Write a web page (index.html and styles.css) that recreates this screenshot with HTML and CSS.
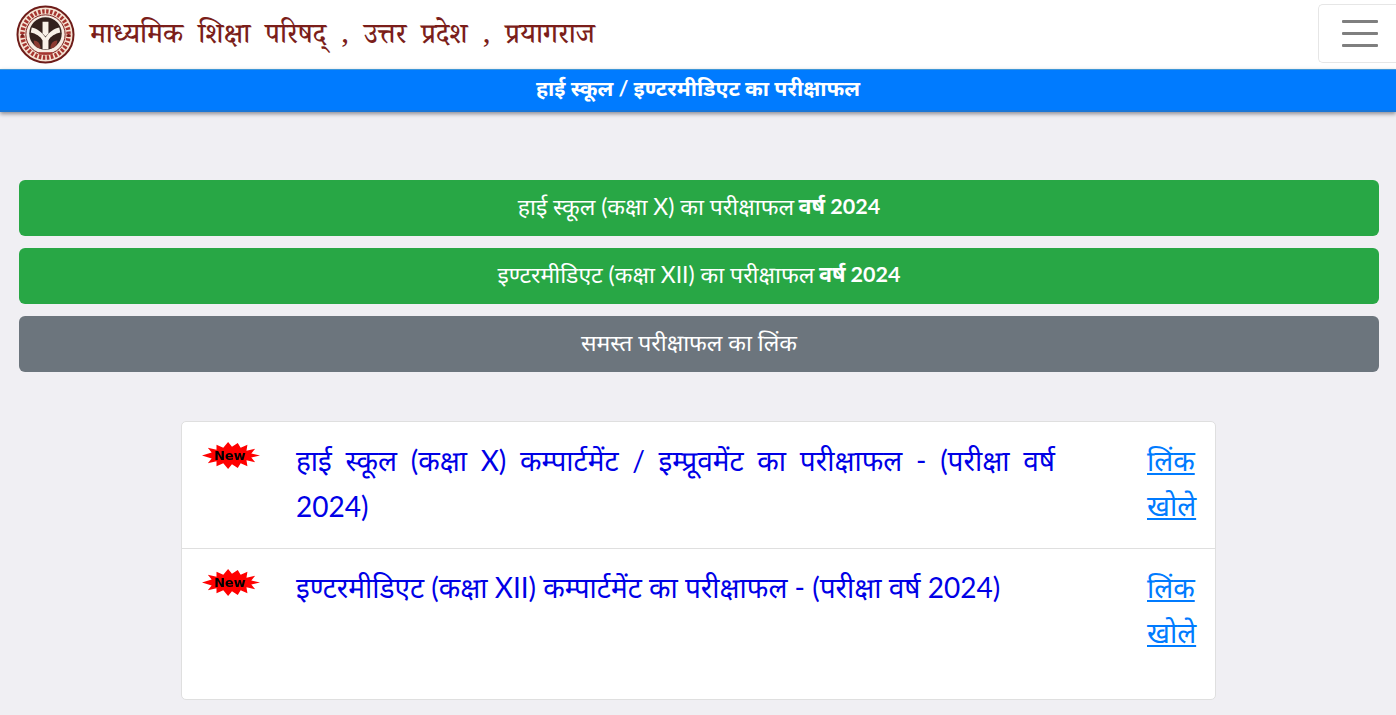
FILE: index.html
```html
<!DOCTYPE html>
<html lang="hi">
<head>
<meta charset="utf-8">
<title>माध्यमिक शिक्षा परिषद्</title>
<link rel="stylesheet" href="styles.css">
</head>
<body>
<header class="navbar">
  <div class="brand">
    <svg class="logo" viewBox="0 0 60 60" aria-hidden="true">
      <circle cx="30" cy="30" r="28.5" fill="#f5e3d3" stroke="#6e1c19" stroke-width="2"/>
      <circle cx="30" cy="30" r="23.5" fill="none" stroke="#a5352f" stroke-width="4.5" stroke-dasharray="2.5 1.6"/>
      <circle cx="30" cy="30" r="20" fill="#f7ece2" stroke="#7a1f1c" stroke-width="1"/>
      <circle cx="30" cy="29" r="16.5" fill="#33211d"/>
      <circle cx="6.5" cy="31" r="1.6" fill="#6e1c19"/>
      <circle cx="53.5" cy="31" r="1.6" fill="#6e1c19"/>
      <path d="M16 23 C22 24 26 28 30 33 C34 28 38 24 44 23 L45 28 C40 29 35 32 33 36 V45 H27 V36 C25 32 20 29 15 28 Z" fill="#f8f1e8"/>
      <path d="M27 17 H33 V29 L30 32 L27 29 Z" fill="#f8f1e8"/>
      <path d="M18 36 C22 36 25 39 25 44 C21 44 18 41 18 36 Z M42 36 C38 36 35 39 35 44 C39 44 42 41 42 36 Z" fill="#8b3a30"/>
      <rect x="23" y="48" width="14" height="2.5" fill="#a5352f"/>
    </svg>
    <span class="brand-title">माध्यमिक शिक्षा परिषद् , उत्तर प्रदेश , प्रयागराज</span>
  </div>
  <button class="toggler" aria-label="Menu"><span></span><span></span><span></span></button>
</header>
<div class="subbar">हाई स्कूल / इण्टरमीडिएट का परीक्षाफल</div>
<main class="content">
  <nav class="buttons">
    <a class="btn btn-green" href="#">हाई स्कूल (कक्षा X) का परीक्षाफल <b>वर्ष 2024</b></a>
    <a class="btn btn-green" href="#">इण्टरमीडिएट (कक्षा XII) का परीक्षाफल <b>वर्ष 2024</b></a>
    <a class="btn btn-grey" href="#">समस्त परीक्षाफल का लिंक</a>
  </nav>
  <section class="card">
    <div class="row row-first">
      <div class="badge-cell">
        <svg class="badge" viewBox="0 0 60 30" aria-hidden="true"><polygon class="burst" points="0,15 10,12 6,7 15,9 15,4 22,7 27,1 31,6 37,2 40,7 47,4 46,10 55,8 51,13 60,15 51,17 55,22 46,20 47,26 40,23 37,28 31,24 27,29 22,23 15,26 15,21 6,23 10,18"/><text x="29" y="20" class="badge-text">New</text></svg>
      </div>
      <p class="row-text">हाई स्कूल (कक्षा X) कम्पार्टमेंट / इम्प्रूवमेंट का परीक्षाफल - (परीक्षा वर्ष 2024)</p>
      <a class="row-link" href="#">लिंक खोले</a>
    </div>
    <div class="row row-last">
      <div class="badge-cell">
        <svg class="badge" viewBox="0 0 60 30" aria-hidden="true"><polygon class="burst" points="0,15 10,12 6,7 15,9 15,4 22,7 27,1 31,6 37,2 40,7 47,4 46,10 55,8 51,13 60,15 51,17 55,22 46,20 47,26 40,23 37,28 31,24 27,29 22,23 15,26 15,21 6,23 10,18"/><text x="29" y="20" class="badge-text">New</text></svg>
      </div>
      <p class="row-text">इण्टरमीडिएट (कक्षा XII) कम्पार्टमेंट का परीक्षाफल - (परीक्षा वर्ष 2024)</p>
      <a class="row-link" href="#">लिंक खोले</a>
    </div>
  </section>
</main>
</body>
</html>
```
FILE: styles.css
```css
* { box-sizing: border-box; }
html, body { margin: 0; height: 715px; overflow: hidden; }
body {
  background: #f0eff3;
  font-family: "Lato", "Noto Sans Devanagari", "Noto Sans", sans-serif;
  color: #212529;
}
.navbar {
  height: 69px;
  background: #fff;
  display: flex;
  align-items: center;
  justify-content: space-between;
  padding: 0 0 1px 16px;
}
.brand { display: flex; align-items: center; gap: 15px; }
.logo { width: 59px; height: 59px; display: block; }
.brand-title {
  font-family: "Noto Serif Devanagari", "Noto Sans Devanagari", "Noto Sans", serif;
  font-size: 28px;
  font-weight: 500;
  line-height: 36px;
  padding-top: 9px;
  color: #7b1e1a;
  white-space: nowrap;
  word-spacing: 7.6px;
}
.toggler {
  align-self: flex-start;
  width: 78px;
  height: 59px;
  margin-top: 4px;
  padding: 0 0 0 23px;
  background: #fff;
  border: 1px solid #e6e6e6;
  border-right: 0;
  border-radius: 5px 0 0 5px;
  display: flex;
  flex-direction: column;
  justify-content: center;
  gap: 9px;
}
.toggler span { display: block; width: 36px; height: 3px; background: #7f7f7f; border-radius: 1px; }
.subbar {
  height: 43px;
  background: #007bff;
  border-top: 1px solid #3f97d8;
  border-bottom: 2px solid #1a76d6;
  box-shadow: 0 2px 4px rgba(60, 60, 70, .55);
  color: #fff;
  font-size: 21.4px;
  font-weight: 700;
  text-align: center;
  line-height: 36px;
}
.content { padding: 68px 17px 0 19px; }
.buttons { display: flex; flex-direction: column; gap: 12px; }
.btn {
  height: 56px;
  border-radius: 6px;
  color: #fff;
  font-size: 23px;
  display: flex;
  align-items: center;
  justify-content: center;
  gap: .2em;
  text-decoration: none;
}
.btn b { font-size: 21.5px; }
.btn-green { background: #28a745; }
.btn-grey { background: #6c757d; padding-right: 20px; }
.card {
  width: 1035px;
  margin: 49px 0 0 162px;
  background: #fff;
  border: 1px solid #dfdfdf;
  border-radius: 5px;
  display: flex;
  flex-direction: column;
}
.row { display: flex; padding: 16px 18px 0 20px; font-size: 28px; line-height: 45.5px; }
.row-first { height: 127px; border-bottom: 1px solid #dfdfdf; }
.row-last { height: 150px; }
.badge-cell { width: 94px; flex: none; }
.badge { width: 58px; height: 29px; display: block; margin-top: 3px; }
.burst { fill: #ff0000; filter: blur(.8px); }
.badge-text { font: 700 13.5px "DejaVu Sans", sans-serif; fill: #000; text-anchor: middle; filter: blur(.4px); }
.row-text { margin: 0; flex: none; width: 759px; color: #0000e6; text-align: justify; }
.row-link { width: 50px; flex: none; margin-left: auto; line-height: 45px; color: #007bff; text-decoration: underline; }
```
